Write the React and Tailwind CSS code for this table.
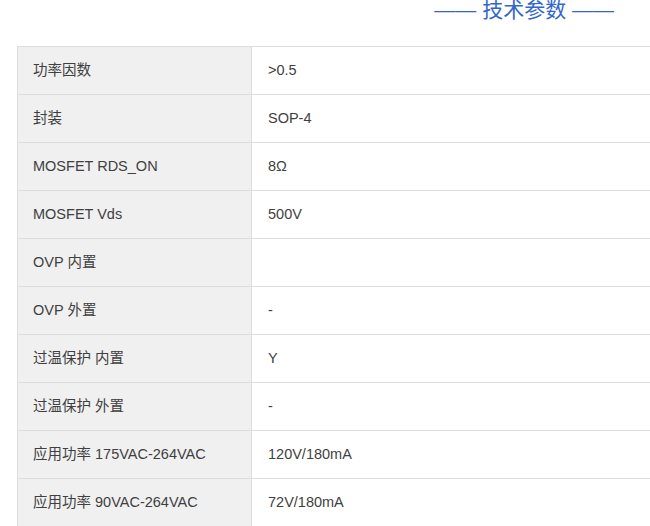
const rows = [
  ["功率因数", ">0.5"],
  ["封装", "SOP-4"],
  ["MOSFET RDS_ON", "8Ω"],
  ["MOSFET Vds", "500V"],
  ["OVP 内置", ""],
  ["OVP 外置", "-"],
  ["过温保护 内置", "Y"],
  ["过温保护 外置", "-"],
  ["应用功率 175VAC-264VAC", "120V/180mA"],
  ["应用功率 90VAC-264VAC", "72V/180mA"],
];

export default function App() {
  return (
    <div className="w-[650px] h-[526px] overflow-hidden bg-white font-['Liberation_Sans','Noto_Sans_CJK_SC',sans-serif]">
      <div className="h-[46px] flex justify-end pr-[36px]">
        <div className="text-[21px] leading-[21px] -mt-[1px] text-[#3366cc] whitespace-nowrap">
          —— 技术参数 ——
        </div>
      </div>
      <div className="ml-[17px] w-[700px] border-t border-[#dddddd]">
        {rows.map(([name, value]) => (
          <div key={name} className="flex h-[48px] border-b border-[#dddddd] text-[14.5px] text-[#3f3f3f]">
            <div className="w-[235px] shrink-0 flex items-center pl-[15px] bg-[#f0f0f0] border-l border-r border-[#dddddd]">
              {name}
            </div>
            <div className="flex-1 flex items-center pl-[16px]">{value}</div>
          </div>
        ))}
      </div>
    </div>
  );
}
